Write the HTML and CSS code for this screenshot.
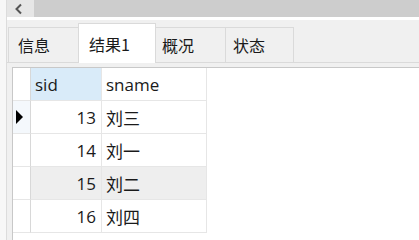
FILE: index.html
```html
<!DOCTYPE html>
<html>
<head>
<meta charset="utf-8">
<link rel="stylesheet" href="styles.css">
</head>
<body>
<div class="app">
  <div class="side"></div>
  <div class="main">
    <div class="hscroll">
      <div class="arrow-btn">
        <svg width="10" height="12" viewBox="0 0 10 12"><path d="M7 1.5 L2.5 6 L7 10.5" fill="none" stroke="#555" stroke-width="2"/></svg>
      </div>
      <div class="track"></div>
    </div>
    <div class="sep"></div>
    <div class="tabs">
      <div class="tab">信息</div>
      <div class="tab active">结果1</div>
      <div class="tab">概况</div>
      <div class="tab">状态</div>
    </div>
    <div class="grid-wrap">
      <div class="grid">
        <div class="row head">
          <div class="ind"></div>
          <div class="c sid sel">sid</div>
          <div class="c name">sname</div>
        </div>
        <div class="row">
          <div class="ind"><svg width="9" height="14" viewBox="0 0 9 14"><path d="M1 0 L8 7 L1 14 Z" fill="#000"/></svg></div>
          <div class="c sid num">13</div>
          <div class="c name">刘三</div>
        </div>
        <div class="row">
          <div class="ind"></div>
          <div class="c sid num">14</div>
          <div class="c name">刘一</div>
        </div>
        <div class="row alt">
          <div class="ind"></div>
          <div class="c sid num">15</div>
          <div class="c name">刘二</div>
        </div>
        <div class="row">
          <div class="ind"></div>
          <div class="c sid num">16</div>
          <div class="c name">刘四</div>
        </div>
      </div>
    </div>
  </div>
</div>
</body>
</html>
```

FILE: styles.css
```css
html, body {
  margin: 0;
  padding: 0;
  background: #f0f0f0;
  width: 419px;
  height: 240px;
  overflow: hidden;
}
.app {
  display: flex;
  height: 240px;
  font-family: "Noto Sans", "Noto Sans CJK SC", sans-serif;
  font-size: 16px;
  color: #1a1a1a;
}
.side {
  width: 6px;
  background: #f7f7f7;
  border-right: 1px solid #dcdcdc;
  flex: none;
}
.main {
  flex: 1;
  display: flex;
  flex-direction: column;
  min-width: 0;
}
.hscroll {
  height: 17px;
  display: flex;
  flex: none;
}
.arrow-btn {
  width: 27px;
  background: #e6e6e6;
  display: flex;
  align-items: center;
  justify-content: center;
  padding-right: 4px;
  box-sizing: border-box;
}
.track {
  flex: 1;
  background: #cdcdcd;
}
.sep {
  height: 3px;
  background: #ffffff;
  flex: none;
}
.tabs {
  display: flex;
  align-items: flex-end;
  height: 43px;
  padding-left: 1px;
  border-bottom: 1px solid #dadada;
  flex: none;
  box-sizing: border-box;
}
.tab {
  height: 35px;
  box-sizing: border-box;
  border: 1px solid #dadada;
  border-bottom: none;
  margin-right: -1px;
  display: flex;
  align-items: center;
  font-family: "Noto Sans CJK SC", sans-serif;
  font-size: 16px;
  color: #1a1a1a;
  background: #f0f0f0;
  padding-left: 9px;
}
.tab:nth-child(1) { width: 71px; }
.tab:nth-child(2) { width: 78px; }
.tab:nth-child(3) { width: 71px; padding-left: 6px; }
.tab:nth-child(4) { width: 69px; padding-left: 7px; }
.tab.active {
  background: #ffffff;
  height: 40px;
  margin-bottom: -1px;
  padding-left: 10px;
  padding-top: 1px;
  position: relative;
  z-index: 1;
}
.grid-wrap {
  flex: 1;
  padding: 4px 0 0 5px;
}
.grid {
  background: #ffffff;
  border: 1px solid #c8c8c8;
  border-right: none;
  border-bottom: none;
  height: 100%;
  box-sizing: border-box;
}
.row {
  display: flex;
  height: 33px;
}
.row.alt .c {
  background: #eeeeee;
}
.ind {
  width: 18px;
  flex: none;
  border-right: 1px solid #d8d8d8;
  border-bottom: 1px solid #e6e6e6;
  box-sizing: border-box;
  display: flex;
  align-items: center;
  justify-content: center;
  padding-right: 4px;
}
.c {
  box-sizing: border-box;
  border-right: 1px solid #e6e6e6;
  border-bottom: 1px solid #e6e6e6;
  display: flex;
  align-items: center;
  font-family: "Open Sans", "Noto Sans CJK SC", sans-serif;
  font-size: 17px;
  color: #1a1a1a;
}
.c.sid { width: 71px; padding-left: 4px; }
.c.sid.num { justify-content: flex-end; padding-right: 5px; padding-left: 0; }
.c.name { width: 105px; padding-left: 4px; }
.head .c.sel { background: #d9ebf9; }
.row:nth-child(2) .ind { background: #f4f8fc; }
```
